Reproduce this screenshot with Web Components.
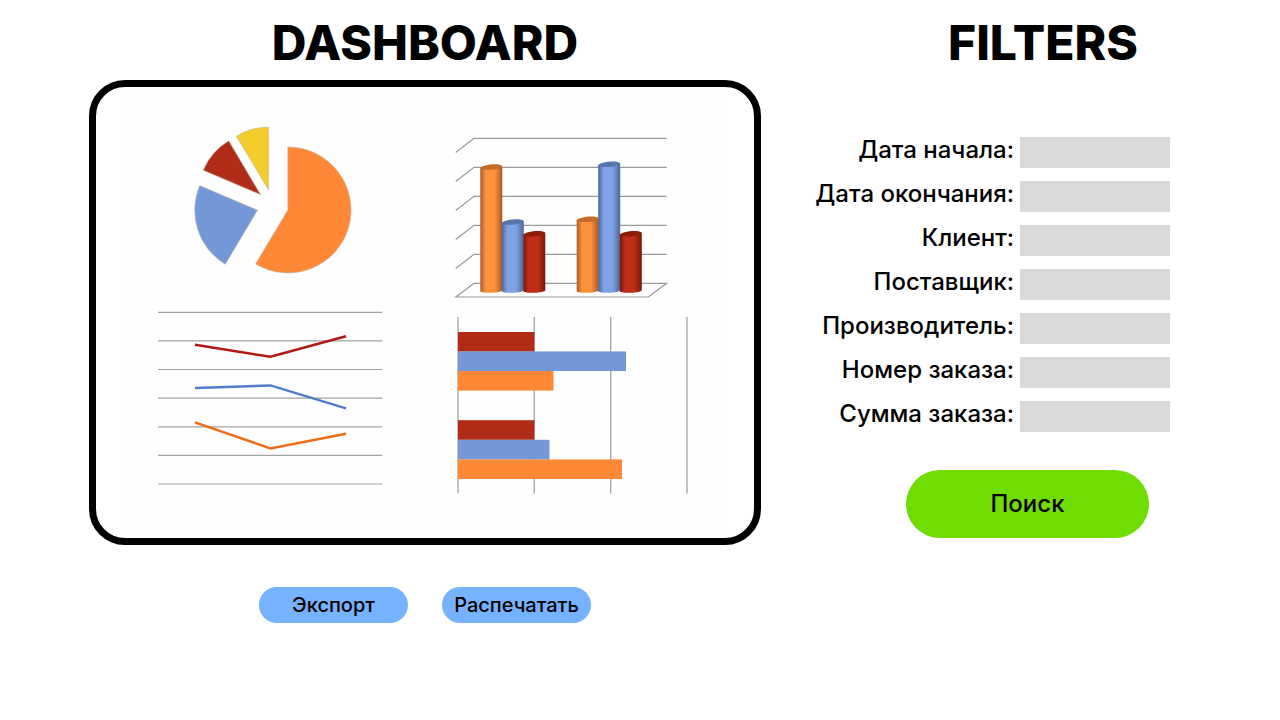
<!DOCTYPE html>
<html lang="ru">
<head>
<meta charset="utf-8">
<meta name="viewport" content="width=device-width, initial-scale=1">
<title>Dashboard</title>
<style>
  body { margin: 0; background: #fff; color: #000; font-family: Inter, sans-serif; }
</style>
</head>
<body>
<dashboard-page>
  <page-section heading="DASHBOARD">
    <chart-board>
      <pie-chart></pie-chart>
      <column-chart></column-chart>
      <line-chart></line-chart>
      <bar-chart></bar-chart>
    </chart-board>
    <button-row>
      <pill-button>Экспорт</pill-button>
      <pill-button>Распечатать</pill-button>
    </button-row>
  </page-section>
  <page-section heading="FILTERS">
    <filter-form>
      <filter-field name="start">Дата начала:</filter-field>
      <filter-field name="end">Дата окончания:</filter-field>
      <filter-field name="client">Клиент:</filter-field>
      <filter-field name="supplier">Поставщик:</filter-field>
      <filter-field name="maker">Производитель:</filter-field>
      <filter-field name="number">Номер заказа:</filter-field>
      <filter-field name="total">Сумма заказа:</filter-field>
      <pill-button slot="action" size="large">Поиск</pill-button>
    </filter-form>
  </page-section>
</dashboard-page>

<script>
const define = (name, render) => customElements.define(name, class extends HTMLElement {
  constructor() {
    super();
    this.attachShadow({ mode: 'open' });
  }
  connectedCallback() {
    this.shadowRoot.innerHTML = render(this);
  }
});

define('dashboard-page', () => `
  <style>
    :host { display: block; }
    main {
      display: grid;
      grid-template-columns: minmax(0, 672fr) minmax(0, 474fr);
      column-gap: 45px;
      align-items: start;
      padding: 14px 0 40px 89px;
    }
  </style>
  <main><slot></slot></main>`);

define('page-section', el => `
  <style>
    :host { display: block; }
    h1 { margin: 0 0 8px; font-size: 48px; line-height: 58px; font-weight: 800; text-align: center; }
  </style>
  <section><h1>${el.getAttribute('heading')}</h1><slot></slot></section>`);

define('chart-board', () => `
  <style>
    :host {
      display: grid;
      grid-template-columns: 1fr 1fr;
      border: 7px solid #000;
      border-radius: 36px;
      overflow: hidden;
      background: linear-gradient(#fefefe, #fefefe) center / 91% 100% no-repeat #fff;
    }
  </style>
  <slot></slot>`);

define('button-row', () => `
  <style>
    :host { display: flex; justify-content: center; gap: 34px; margin-top: 42px; }
  </style>
  <slot></slot>`);

define('pill-button', () => `
  <style>
    :host { display: block; }
    button {
      display: block;
      width: 149px;
      height: 36px;
      padding: 0;
      border: 0;
      border-radius: 18px;
      background: #75b2ff;
      color: #000;
      font: 500 20px/24px Inter, sans-serif;
      cursor: pointer;
    }
    :host([size="large"]) button {
      width: 243px;
      height: 68px;
      border-radius: 34px;
      background: #6fdd00;
      font-size: 24px;
    }
  </style>
  <button type="button"><slot></slot></button>`);

define('filter-form', () => `
  <style>
    :host { display: block; padding: 57px 110px 0 0; }
    form { display: flex; flex-direction: column; gap: 13px; }
    .action { display: flex; justify-content: flex-end; padding: 25px 21px 0 0; }
  </style>
  <form>
    <slot></slot>
    <div class="action"><slot name="action"></slot></div>
  </form>`);

define('filter-field', el => `
  <style>
    :host { display: flex; justify-content: flex-end; align-items: flex-start; gap: 6px; }
    label { font-size: 24px; line-height: 26px; font-weight: 500; white-space: nowrap; }
    input {
      box-sizing: border-box;
      width: 150px;
      height: 31px;
      padding: 0 6px;
      border: 0;
      border-radius: 0;
      background: #d9d9d9;
      font: 500 16px/20px Inter, sans-serif;
    }
  </style>
  <label for="field"><slot></slot></label>
  <input id="field" type="text" name="${el.getAttribute('name')}">`);

const chart = (name, height, body) => define(name, () => `
  <style>
    :host, svg { display: block; }
    svg { width: 100%; height: auto; }
  </style>
  <svg viewBox="0 0 329 ${height}" aria-hidden="true">${body}</svg>`);

const RED = '#b02c16', BLUE = '#7398d8', ORANGE = '#ff8837';

chart('pie-chart', 221, `
  <g stroke="#bdb8ac" stroke-width=".6">
    <path fill="${ORANGE}" d="M191.8 123V60A63 63 0 1 1 159.6 177Z"/>
    <path fill="${BLUE}" d="M161.5 123.2L129.3 177.3A63 63 0 0 1 103.7 98.6Z"/>
    <path fill="${RED}" d="M164.5 107.6L107.2 83.2A63 63 0 0 1 132.7 53.8Z"/>
    <path fill="#f4cd2d" d="M172.6 103L140.3 49.2A63 63 0 0 1 172.6 40Z"/>
  </g>`);

const levels = [51.3, 80.3, 109.3, 138.3, 167.3];
const shades = {
  o: ['#a85a25', '#ff913c', '#c46a2b'],
  b: ['#4c6597', '#7fa2e6', '#5675ab'],
  r: ['#76190c', '#c02d18', '#8c1d0e']
};
const cylinders = [
  ['o', 55.3, 80.5], ['b', 76.8, 135.5], ['r', 98.3, 147.2],
  ['o', 151.7, 132.7], ['b', 173.2, 77.7], ['r', 194.8, 147.2]
];
chart('column-chart', 221, `
  <defs>${Object.entries(shades).map(([k, [edge, face]]) => `
    <linearGradient id="${k}">
      <stop offset="0" stop-color="${edge}"/><stop offset=".25" stop-color="${face}"/>
      <stop offset=".65" stop-color="${face}"/><stop offset="1" stop-color="${edge}"/>
    </linearGradient>`).join('')}
  </defs>
  <g fill="none" stroke="#999" stroke-width="1.2">
    ${levels.map(y => `<path d="M30.7 ${y + 14.2}L49 ${y}H241.7"/>`).join('')}
    <path d="M30.7 210L49 196.3H241.7L223.4 210Z"/>
  </g>
  ${cylinders.map(([k, x, y]) => `
    <path fill="url(#${k})" d="M${x} ${y}V204.5C${x + 3} 206.6 ${x + 19} 206.2 ${x + 22} 203.5V${y - 1}Z"/>
    <path fill="${shades[k][2]}" d="M${x} ${y + 1}C${x} ${y - 3} ${x + 20} ${y - 5} ${x + 22} ${y - 1.5}C${x + 22} ${y + 2} ${x + 4} ${y + 3.5} ${x} ${y + 1}Z"/>`).join('')}`);

chart('line-chart', 230, `
  <path stroke="#a3a3a3" stroke-width="1.2" d="${[4.3, 32.9, 61.5, 90.2, 118.8, 147.4, 176].map(y => `M62 ${y}H286.3`).join('')}"/>
  <g fill="none" stroke-width="2.5">
    <path stroke="#b01813" d="M99 36.8L174.5 48.8L250 28.2"/>
    <path stroke="#4f7dc9" d="M99 80L174.5 77.4L250 100.4"/>
    <path stroke="#ef6d17" d="M99 114.4L174.5 140.4L250 125.8"/>
  </g>`);

const bars = [
  [RED, 24, 109.3], [BLUE, 43.4, 201], [ORANGE, 63, 128.5],
  [RED, 112.2, 109.3], [BLUE, 131.8, 124.5], [ORANGE, 151.4, 197]
];
chart('bar-chart', 230, `
  <path stroke="#a3a3a3" stroke-width="1.3" d="${[33, 109.3, 185.7, 262].map(x => `M${x} 9V185.6`).join('')}"/>
  ${bars.map(([fill, y, end]) => `<rect fill="${fill}" x="33" y="${y}" width="${end - 33}" height="19.6"/>`).join('')}`);
</script>
</body>
</html>
